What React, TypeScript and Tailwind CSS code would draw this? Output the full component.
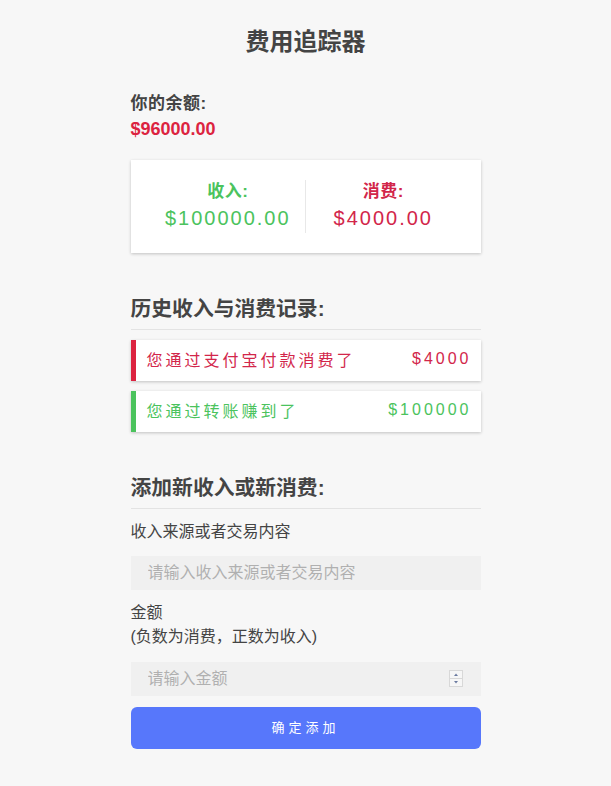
import React from "react";

const font = { fontFamily: '"Liberation Sans", "Noto Sans CJK SC", sans-serif' };

export default function App() {
  return (
    <div className="min-h-[786px] w-full bg-[#f7f7f7] text-[#444]" style={font}>
      <div className="mx-auto w-[350px] pt-[26px] pb-[37px]">
        <h1 className="text-center text-[24px] leading-[32px] font-bold text-[#444]">费用追踪器</h1>

        <div className="mt-[34px] text-[17px] leading-[24px] font-bold tracking-[0.5px]">你的余额:</div>
        <div className="text-[18px] leading-[26px] font-bold text-[#dc2340]">$96000.00</div>

        <div className="mt-[18px] flex h-[93px] bg-white px-[20px] shadow-[0_1px_3px_rgba(0,0,0,0.22)]">
          <div className="flex flex-1 flex-col items-center pt-[20px]">
            <div className="text-[17px] leading-[24px] font-bold tracking-[0.5px] text-[#4bc35d]">收入:</div>
            <div className="text-[20px] leading-[28px] tracking-[2px] text-[#4bc35d]">$100000.00</div>
          </div>
          <div className="my-[20px] w-px bg-[#e8e8e8]"></div>
          <div className="flex flex-1 flex-col items-center pt-[20px]">
            <div className="text-[17px] leading-[24px] font-bold tracking-[0.5px] text-[#d2264a]">消费:</div>
            <div className="text-[20px] leading-[28px] tracking-[2px] text-[#d2264a]">$4000.00</div>
          </div>
        </div>

        <h3 className="mt-[42px] text-[20.8px] leading-[28px] font-bold">历史收入与消费记录:</h3>
        <div className="mt-[6px] h-px bg-[#e3e3e3]"></div>

        <ul className="mt-[10px] flex flex-col gap-[10px]">
          <li className="flex h-[41px] items-center justify-between border-l-[5px] border-[#dc2340] bg-white pl-[11px] pr-[9px] text-[16px] tracking-[3px] text-[#d2264a] shadow-[0_1px_3px_rgba(0,0,0,0.22)]">
            <span>您通过支付宝付款消费了</span>
            <span className="-mt-[3px]">$4000</span>
          </li>
          <li className="flex h-[41px] items-center justify-between border-l-[5px] border-[#4bc35d] bg-white pl-[11px] pr-[9px] text-[16px] tracking-[3px] text-[#4bc35d] shadow-[0_1px_3px_rgba(0,0,0,0.22)]">
            <span>您通过转账赚到了</span>
            <span className="-mt-[3px]">$100000</span>
          </li>
        </ul>

        <h3 className="mt-[42px] text-[20.8px] leading-[28px] font-bold">添加新收入或新消费:</h3>
        <div className="mt-[6px] h-px bg-[#e3e3e3]"></div>

        <div className="mt-[11px] text-[16px] leading-[24px]">收入来源或者交易内容</div>
        <input
          type="text"
          placeholder="请输入收入来源或者交易内容"
          className="mt-[12px] block h-[34px] w-full bg-[#f0f0f0] px-[17px] text-[16px] outline-none placeholder:text-[#b0b0b0]"
          style={font}
        />

        <div className="mt-[11px] text-[16px] leading-[24px]">
          金额
          <br />
          (负数为消费，正数为收入)
        </div>
        <div className="relative mt-[13px]">
          <input
            type="text"
            placeholder="请输入金额"
            className="block h-[34px] w-full bg-[#f0f0f0] px-[17px] text-[16px] outline-none placeholder:text-[#b0b0b0]"
            style={font}
          />
          <div className="absolute right-[18px] top-[8px] flex h-[17px] w-[14px] flex-col border border-[#d8d8d8] bg-[#f6f6f6]">
            <svg viewBox="0 0 12 7" className="h-[7px] w-[12px]">
              <path d="M4 5 L6 2.5 L8 5 Z" fill="#6a7aa0" />
            </svg>
            <div className="h-px bg-[#d8d8d8]"></div>
            <svg viewBox="0 0 12 7" className="h-[7px] w-[12px]">
              <path d="M4 2 L6 4.5 L8 2 Z" fill="#6a7aa0" />
            </svg>
          </div>
        </div>

        <button className="mt-[11px] block h-[42px] w-full rounded-[6px] bg-[#5777fb] text-[13px] tracking-[4px] text-white">
          确定添加
        </button>
      </div>
    </div>
  );
}
